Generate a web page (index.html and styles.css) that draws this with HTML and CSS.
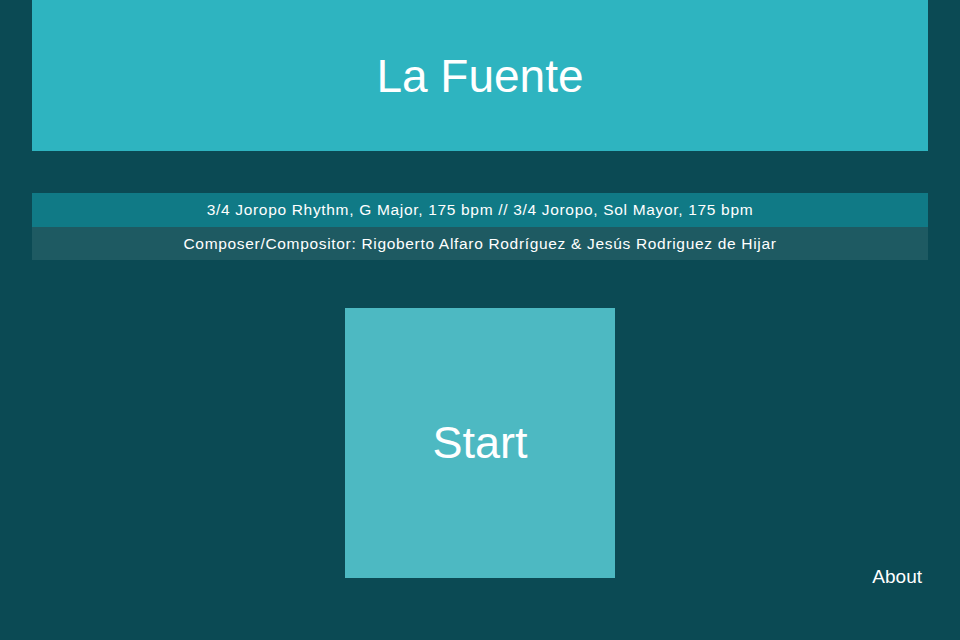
FILE: index.html
```html
<!DOCTYPE html>
<html>
<head>
<meta charset="utf-8">
<link rel="stylesheet" href="styles.css">
</head>
<body>
<div class="page">
  <header class="title-bar"><h1 class="title">La Fuente</h1></header>
  <section class="info">
    <div class="info-row info-primary">3/4 Joropo Rhythm, G Major, 175 bpm // 3/4 Joropo, Sol Mayor, 175 bpm</div>
    <div class="info-row info-secondary">Composer/Compositor: Rigoberto Alfaro Rodríguez &amp; Jesús Rodriguez de Hijar</div>
  </section>
  <section class="stage">
    <div class="spacer"></div>
    <button class="start">Start</button>
    <div class="about-cell"><a class="about">About</a></div>
  </section>
</div>
</body>
</html>
```
FILE: styles.css
```css
html, body {
  margin: 0;
  padding: 0;
  background: #0b4a54;
  font-family: "Liberation Sans", Arial, sans-serif;
  color: #ffffff;
}
.page {
  width: 960px;
  height: 640px;
  overflow: hidden;
}
.title-bar {
  margin: 0 32px;
  height: 151px;
  background: #2eb4c0;
  display: flex;
  align-items: center;
  justify-content: center;
}
.title {
  margin: 0;
  font-weight: normal;
  font-size: 46px;
  line-height: 1;
}
.info {
  margin: 42px 32px 0;
  display: flex;
  flex-direction: column;
}
.info-row {
  display: flex;
  align-items: center;
  justify-content: center;
  font-size: 15.5px;
  letter-spacing: 0.68px;
}
.info-primary {
  height: 34px;
  background: #107a86;
  padding-bottom: 1px;
  box-sizing: border-box;
}
.info-secondary {
  height: 33px;
  background: #1e5a62;
}
.stage {
  margin-top: 48px;
  display: grid;
  grid-template-columns: 1fr 270px 1fr;
}
.start {
  width: 270px;
  height: 270px;
  border: none;
  padding: 0;
  margin: 0;
  background: #4db9c2;
  color: #ffffff;
  font-family: "Liberation Sans", Arial, sans-serif;
  font-size: 45px;
}
.about-cell {
  display: flex;
  justify-content: flex-end;
  align-items: flex-end;
  padding-right: 38px;
}
.about {
  font-size: 19px;
  line-height: 22px;
  margin-bottom: -10px;
  color: #ffffff;
}
```
